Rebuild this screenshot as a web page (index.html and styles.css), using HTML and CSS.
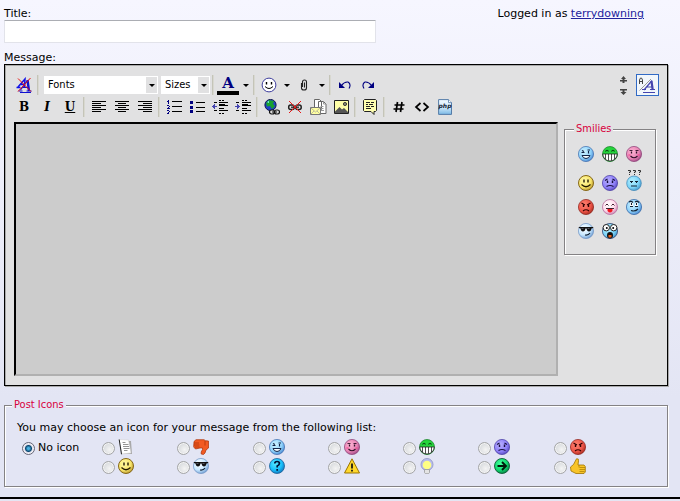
FILE: index.html
```html
<!DOCTYPE html>
<html lang="en">
<head>
<meta charset="utf-8">
<title>Post message</title>
<link rel="stylesheet" href="styles.css">
</head>
<body>
<svg class="defs" width="0" height="0" aria-hidden="true">
  <defs>
    <radialGradient id="g-blue" cx=".38" cy=".35" r=".75"><stop offset="0" stop-color="#d0f4ff"/><stop offset=".6" stop-color="#8cd0fa"/><stop offset="1" stop-color="#3b74c4"/></radialGradient>
    <radialGradient id="g-pink" cx=".38" cy=".35" r=".75"><stop offset="0" stop-color="#ffb4d4"/><stop offset=".6" stop-color="#e684b4"/><stop offset="1" stop-color="#8c3a78"/></radialGradient>
    <radialGradient id="g-yellow" cx=".38" cy=".35" r=".75"><stop offset="0" stop-color="#fffaa8"/><stop offset=".6" stop-color="#f8e468"/><stop offset="1" stop-color="#a88420"/></radialGradient>
    <radialGradient id="g-purple" cx=".38" cy=".35" r=".75"><stop offset="0" stop-color="#b8b0ff"/><stop offset=".6" stop-color="#8e80f8"/><stop offset="1" stop-color="#4a3cae"/></radialGradient>
    <radialGradient id="g-red" cx=".38" cy=".35" r=".75"><stop offset="0" stop-color="#ff8474"/><stop offset=".6" stop-color="#ee5548"/><stop offset="1" stop-color="#962418"/></radialGradient>
    <radialGradient id="g-sky" cx=".38" cy=".35" r=".75"><stop offset="0" stop-color="#b4f0ff"/><stop offset=".6" stop-color="#7cd4f8"/><stop offset="1" stop-color="#3886bc"/></radialGradient>
    <radialGradient id="g-white" cx=".38" cy=".35" r=".75"><stop offset="0" stop-color="#fff"/><stop offset=".55" stop-color="#c8e8ff"/><stop offset="1" stop-color="#5c8cc8"/></radialGradient>
    <radialGradient id="g-rose" cx=".4" cy=".35" r=".7"><stop offset="0" stop-color="#fff"/><stop offset=".6" stop-color="#ffdcec"/><stop offset="1" stop-color="#c880b0"/></radialGradient>
    <radialGradient id="g-cyan" cx=".4" cy=".35" r=".7"><stop offset="0" stop-color="#58e8ff"/><stop offset=".6" stop-color="#18c0fc"/><stop offset="1" stop-color="#1470b8"/></radialGradient>
    <radialGradient id="g-green" cx=".4" cy=".35" r=".7"><stop offset="0" stop-color="#48ffa0"/><stop offset=".6" stop-color="#10dc70"/><stop offset="1" stop-color="#087840"/></radialGradient>
    <linearGradient id="g-php" x2="0" y2="1"><stop offset="0" stop-color="#f2faff"/><stop offset=".5" stop-color="#d4ecfc"/><stop offset="1" stop-color="#7ab8e4"/></linearGradient>
  </defs>

  <symbol id="wink" viewBox="0 0 16 16"><circle cx="8" cy="8" r="7.600" fill="url(#g-blue)" stroke="#3c6cae" stroke-width=".7"/><path d="M3.500 6.500h3M4 4.500l2 1M10.500 5v2.500M9.500 4h2.500" stroke="#124" stroke-width="1.100" fill="none"/><path d="M4 9.500h8q-1 3-4 3t-4-3z" fill="#f4fcff" stroke="#124"/></symbol>
  <symbol id="grin" viewBox="0 0 16 16"><circle cx="8" cy="8" r="7.500" fill="#25d53c" stroke="#147a24" stroke-width=".7"/><path d="M3.500 5.500q1.500-2.500 3 0M9.500 5.500q1.500-2.500 3 0" fill="none" stroke="#084010" stroke-width="1.100"/><path d="M.7 8h14.600q-.7 6.500-7.300 7Q1.400 14.500.7 8z" fill="#fff" stroke="#222" stroke-width=".8"/><path d="M3.500 8v5M6.500 8v6.500M9.500 8v6.500M12.500 8v5" stroke="#222" stroke-width=".8"/></symbol>
  <symbol id="blush" viewBox="0 0 16 16"><circle cx="8" cy="8" r="7.600" fill="url(#g-pink)" stroke="#8a3c74" stroke-width=".7"/><path d="M3.500 4.500h3M9.500 4.500h3" stroke="#301028" stroke-width=".9"/><path d="M5.500 5.500v2M10.500 5.500v2" stroke="#301028" stroke-width="1.300"/><path d="M4.500 10q3.500 3.500 7 0" fill="none" stroke="#301028" stroke-width="1.100"/><path d="M2.500 9h2M11.500 9h2" stroke="#f83888"/></symbol>
  <symbol id="smile" viewBox="0 0 16 16"><circle cx="8" cy="8" r="7.500" fill="url(#g-yellow)" stroke="#866818"/><path d="M6 4.500v3M10 4.500v3" stroke="#221800" stroke-width="1.400"/><path d="M3.500 9.500q4.500 4.500 9 0" fill="none" stroke="#221800" stroke-width="1.200"/></symbol>
  <symbol id="sad" viewBox="0 0 16 16"><circle cx="8" cy="8" r="7.600" fill="url(#g-purple)" stroke="#4436a0" stroke-width=".7"/><path d="M3 5.500l2.500-1.500M10.500 4L13 5.500M4.500 11.500q3.500-2 7 0" fill="none" stroke="#181040" stroke-width="1.100"/><path d="M5.500 5.500V8M10.500 5.500V8" stroke="#181040" stroke-width="1.400"/></symbol>
  <symbol id="mad" viewBox="0 0 16 16"><circle cx="8" cy="8" r="7.600" fill="url(#g-red)" stroke="#8c2018" stroke-width=".7"/><path d="M3.500 4L7 6M12.500 4L9 6M5 12q3-2.500 6 0" fill="none" stroke="#300" stroke-width="1.100"/><path d="M5.500 5.500V8M10.500 5.500V8" stroke="#300" stroke-width="1.400"/></symbol>
  <symbol id="confused" viewBox="0 0 16 21"><circle cx="8" cy="13.300" r="7.300" fill="url(#g-sky)" stroke="#3a84b4" stroke-width=".7"/><path d="M4 11.500h3M9 11.500h3M5 16h6" fill="none" stroke="#123"/><path d="M5.500 11.500v1.500M10.500 11.500v1.500" stroke="#123"/><path d="M2 .5h2.500v1.500h-1v1M3 4.500h1M7 .5h2.500v1.500h-1v1M8 4.500h1M12 .5h2.500v1.500h-1v1M13 4.500h1" fill="none" stroke="#333"/></symbol>
  <symbol id="tongue" viewBox="0 0 16 16"><circle cx="8" cy="8" r="7.500" fill="url(#g-rose)" stroke="#b870a0" stroke-width=".8"/><path d="M3.500 6.500L5 5l1.500 1.500M9.500 6.500L11 5l1.500 1.500M4 9.500h8" fill="none" stroke="#402030"/><path d="M5.500 10h5v2q-2.500 3-5 0z" fill="#f01820"/></symbol>
  <symbol id="roll" viewBox="0 0 16 16"><circle cx="8" cy="8" r="7.600" fill="url(#g-blue)" stroke="#2c62a4" stroke-width=".7"/><path d="M4 3.500h3v3.500H4zM9 3.500h3v3.500H9z" fill="#fff"/><path d="M3 3q2-1.500 4 .5M9 3q2-1.500 4 .5M5.500 4v2M10.500 4v2M4 7.500h3M9 7.500h3M5 11.500q4 1.500 7-1.500" fill="none" stroke="#123" stroke-width="1.100"/></symbol>
  <symbol id="cool" viewBox="0 0 16 16"><circle cx="8" cy="8" r="7.600" fill="url(#g-white)" stroke="#7094c4" stroke-width=".7"/><path d="M.8 4h14.400v1l-1.700.5q-.5 3-2.500 3T8.500 5.500h-1Q7 8.500 5 8.500t-2.500-3L.8 5z" fill="#111"/><path d="M3.500 5.500h2M9.500 5.500h2" stroke="#667" stroke-width=".8"/><path d="M7 12q3.500.5 5-2" fill="none" stroke="#123" stroke-width="1.100"/></symbol>
  <symbol id="eek" viewBox="0 0 16 16"><circle cx="8" cy="8" r="7.600" fill="url(#g-sky)" stroke="#236" stroke-width=".7"/><circle cx="4.300" cy="4.700" r="3.200" fill="#fff" stroke="#111" stroke-width=".9"/><circle cx="11.700" cy="4.700" r="3.200" fill="#fff" stroke="#111" stroke-width=".9"/><circle cx="4.800" cy="5" r="1"/><circle cx="11.200" cy="5" r="1"/><ellipse cx="8" cy="12.300" rx="3" ry="3.300" fill="#111"/><path d="M6.500 12h3v2.500h-3z" fill="#e85c18"/></symbol>
  <symbol id="page" viewBox="0 0 16 16"><path d="M3 2h10l1 13H4z" fill="#a8a8a8"/><path d="M1 .5l9.500.5 2.500 13-9 1z" fill="#fff" stroke="#ccc" stroke-width=".5"/><path d="M1.200.5l2.300 14.800" stroke="#222"/><path d="M4.500 3.500h3M5 5.500h5.500M5 7.500h6M5.500 9.500h6M6 11.500h3.500" stroke="#888" stroke-width=".9"/></symbol>
  <symbol id="thumbdown" viewBox="0 0 16 16"><path d="M1 2.500L3 .7h8l1.500 1L15.500 2v7l-2.500 2-1 3-1.500 1.500-2.300-.5V13l1.300-2.500V9H7L2.500 10 .7 8z" fill="#f25a22" stroke="#a83008" stroke-width=".7"/><path d="M1 4h5M.8 6h5.500M2 8h4.500M12 2v4.500" fill="none" stroke="#b03408" stroke-width=".8"/></symbol>
  <symbol id="question" viewBox="0 0 16 16"><circle cx="8" cy="8" r="7.500" fill="url(#g-cyan)" stroke="#186098" stroke-width=".8"/><path d="M5.800 5.500q0-2 2.300-2t2.300 2Q10.400 7 8.200 8v1.500M8.200 11v1.800" fill="none" stroke="#013" stroke-width="1.700"/></symbol>
  <symbol id="warn" viewBox="0 0 16 16"><path d="M8 .8L15.500 15H.5z" fill="#ffd82c" stroke="#9a7400" stroke-linejoin="round"/><path d="M8 5.500v5M8 11.800v1.700" stroke="#111" stroke-width="1.700"/></symbol>
  <symbol id="bulb" viewBox="0 0 16 16"><circle cx="8" cy="6.500" r="6" fill="#b8bcec" stroke="#9aa0cc"/><circle cx="8" cy="7" r="4.300" fill="#ffff84"/><path d="M5.500 11.500h5v3l-1 1.200h-3l-1-1.200z" fill="#e4e4e4" stroke="#999" stroke-width=".8"/></symbol>
  <symbol id="arrow" viewBox="0 0 16 16"><circle cx="8" cy="8" r="7.500" fill="url(#g-green)" stroke="#0c5c34" stroke-width=".9"/><path d="M3.500 8h8M8 4l4 4-4 4" fill="none" stroke="#001a0c" stroke-width="1.900"/></symbol>
  <symbol id="thumbup" viewBox="0 0 16 16"><path d="M.5 9l3-2.500L6.500.800q2.500-.5 2 2L8 7h6l1.300 1.500v5.500L14 15.500H6L1 13z" fill="#f8c428" stroke="#a07400" stroke-width=".8"/><path d="M9 7v2.500M9.500 9.500h5.500M9.500 11.500h5.500M9.500 13.500h5" stroke="#a87c00" stroke-width=".7"/></symbol>
</svg>

<form class="page">
  <div class="head">
    <label for="title">Title:</label>
    <p class="login">Logged in as <a href="#">terrydowning</a></p>
  </div>
  <input class="title-box" id="title" type="text">
  <label class="message-label" for="message">Message:</label>

  <div class="editor">
    <div class="tools">
      <div class="bar">
        <button type="button" class="tool" aria-label="Remove formatting"><svg width="16" height="16"><path d="M.5 10.500h4M2 10L9 2l-.5 8M4.500 7.500h4" fill="none" stroke="#1010e8" stroke-width="1.500"/><path d="M4.500 13L11.500 3.500M7 10.500h6M2.500 14h4M10.500 14h5M4 15.500h11" fill="none" stroke="#1010d0" stroke-width="1.200"/><path d="M11.500 3l1.500 11" stroke="#1010d0" stroke-width="2.400"/><path d="M2 1.500l13 13M14.500 1L2 14.500" stroke="#e81010"/></svg></button>
        <span class="sep"></span>
        <span class="drop drop-font"><select aria-label="Fonts"><option>Fonts</option></select><i class="drop-arrow"><b class="tri"></b></i></span>
        <span class="drop drop-size"><select aria-label="Sizes"><option>Sizes</option></select><i class="drop-arrow"><b class="tri"></b></i></span>
        <span class="sep"></span>
        <button type="button" class="tool color" aria-label="Text colour"><span class="letter">A</span></button>
        <button type="button" class="more" aria-label="More colours"><b class="tri"></b></button>
        <span class="sep"></span>
        <button type="button" class="tool" aria-label="Insert smilie"><svg width="16" height="16"><circle cx="8" cy="8" r="6.900" fill="#fff" stroke="#3c3c9c"/><path d="M5.500 5v2.500M10.500 5v2.500" stroke="#000" stroke-width="1.400"/><path d="M4 9.500q4 4 8 0" fill="none" stroke="#000"/></svg></button>
        <button type="button" class="more" aria-label="More smilies"><b class="tri"></b></button>
        <button type="button" class="tool" aria-label="Attach file"><svg width="8" height="12"><path d="M2.500 8V3q0-2 2-2t2 2v6q0 2-2.500 2T1.500 9V4M4.500 3.500v5" fill="none" stroke="#222" stroke-width="1.100"/></svg></button>
        <button type="button" class="more" aria-label="More attachments"><b class="tri"></b></button>
        <span class="sep"></span>
        <button type="button" class="tool" aria-label="Undo"><svg width="14" height="10"><path d="M1 2v6h6z" fill="#000080"/><path d="M3.500 5.500q3-4 6.500-3.500 3.500 2 1 6.500" fill="none" stroke="#000080" stroke-width="1.100"/></svg></button>
        <button type="button" class="tool" aria-label="Redo"><svg width="14" height="10"><path d="M13 2v6H7z" fill="#000080"/><path d="M10.500 5.500Q7.500 1.500 4 2 .5 4 3 8.500" fill="none" stroke="#000080" stroke-width="1.100"/></svg></button>
        <span class="resize">
          <button type="button" class="size-step" aria-label="Decrease size"><svg width="7" height="7"><path d="M3.500 0L6 3H4.500v1L7 4v1.500H4.500V7h-2V5.500H0V4h2.500V3H1z" fill="#444"/></svg></button>
          <button type="button" class="size-step" aria-label="Increase size"><svg width="7" height="7"><path d="M3.500 7L6.500 4H4.500V2.500H7V1H0v1.500h2.500V4H.5z" fill="#444"/></svg></button>
        </span>
        <button type="button" class="mode" aria-label="Switch editor mode"><svg width="19" height="18"><path d="M1.500 8V4l1-2h1l1 2v4M1.500 5.500h3" fill="none" stroke="#444"/><path d="M1.500 14.500L13 3" stroke="#999"/><path d="M6 14l8-9.500M9 11h5M4 13.500h4M12 13.500h5M5 16.500h12" fill="none" stroke="#4444ae" stroke-width="1.200"/><path d="M13.500 5l1.200 9" stroke="#4444ae" stroke-width="2.200"/></svg></button>
      </div>
      <div class="bar">
        <button type="button" class="tool"><span class="letter">B</span></button>
        <button type="button" class="tool"><span class="letter italic">I</span></button>
        <button type="button" class="tool"><span class="letter under">U</span></button>
        <span class="sep"></span>
        <button type="button" class="tool" aria-label="Align left"><svg class="px" width="14" height="12"><path d="M0 .5h14M0 2.500h9M0 4.500h14M0 6.500h9M0 8.500h14M0 10.500h9"/></svg></button>
        <button type="button" class="tool" aria-label="Align centre"><svg class="px" width="14" height="12"><path d="M0 .5h14M3 2.500h8M0 4.500h14M3 6.500h8M0 8.500h14M3 10.500h8"/></svg></button>
        <button type="button" class="tool" aria-label="Align right"><svg class="px" width="14" height="12"><path d="M0 .5h14M5 2.500h9M0 4.500h14M5 6.500h9M0 8.500h14M5 10.500h9"/></svg></button>
        <span class="sep"></span>
        <button type="button" class="tool" aria-label="Numbered list"><svg class="px" width="15" height="14"><path d="M5 1.500h10M5 6.500h10M5 11.500h10"/><path class="navy" d="M1.500 0v4M0 1.500h1M0 5.500h2M2.500 6v1M1 7.500h1M0 8.500h3M0 10.500h2M2.500 11v1M1 12h1M0 13.500h2"/></svg></button>
        <button type="button" class="tool" aria-label="Bulleted list"><svg class="px" width="15" height="14"><path d="M6 2.500h9M6 7.500h9M6 11.500h9"/><path d="M0 1h3v3H0zM0 6h3v3H0zM0 10h3v3H0z" fill="#000080" stroke="none"/></svg></button>
        <button type="button" class="tool" aria-label="Outdent"><svg class="px" width="16" height="14"><path d="M7 .5h2M10 .5h2M2 2.500h3M7 2.500h9M7 5.500h9M7 8.500h5M2 10.500h3M7 10.500h9M7 13.500h2M10 13.500h2M7 4.500h6"/><path d="M0 6.500L3 3v3h2v1H3v3z" fill="#4444b0" stroke="none"/></svg></button>
        <button type="button" class="tool" aria-label="Indent"><svg class="px" width="16" height="14"><path d="M7 .5h2M10 .5h2M1 2.500h3M7 2.500h9M7 5.500h9M7 8.500h5M1 10.500h3M7 10.500h9M7 13.500h2M10 13.500h2M7 4.500h6"/><path d="M5 6.500L2 3v3H0v1h2v3z" fill="#4444b0" stroke="none"/></svg></button>
        <span class="sep"></span>
        <button type="button" class="tool" aria-label="Insert link"><svg width="16" height="16"><circle cx="6.500" cy="6" r="5.600" fill="#2040c8" stroke="#101850"/><path d="M5 1l5 1-1 3 2 2-3 3-2-3-3 .5L2 4z" fill="#18a030"/><path d="M3 3l2-1v2z" fill="#8ff"/><rect x="5.500" y="11" width="5" height="4" rx="2" fill="#ddd" stroke="#111" stroke-width="1.200"/><rect x="10.500" y="11" width="5" height="4" rx="2" fill="#ddd" stroke="#111" stroke-width="1.200"/><path d="M8 13h5" stroke="#111"/></svg></button>
        <button type="button" class="tool" aria-label="Remove link"><svg width="16" height="14"><rect x="1.700" y="5" width="5.500" height="4.500" rx="2" fill="none" stroke="#222" stroke-width="1.500"/><rect x="8.700" y="5" width="5.500" height="4.500" rx="2" fill="none" stroke="#222" stroke-width="1.500"/><path d="M4 7.200h8" stroke="#222" stroke-width="1.300"/><path d="M2 1l12 12M14 1L2 13" stroke="#e81818"/></svg></button>
        <button type="button" class="tool" aria-label="Insert email link"><svg width="17" height="16"><path d="M4.500.5h5l2 2v8h-7zM8.500 2.500h5l2.500 2.500v9.500H8.500z" fill="#fff" stroke="#666"/><path d="M13.500 2.500V5H16M10.500 7.500h3M10.500 9.500h3M11 11.500h3" fill="none" stroke="#999"/><path d="M.5 8.500h10v7H.5z" fill="#ffffa0" stroke="#777"/><path d="M1 9l4.500 4L10 9M1 15l3-3M10 15l-3-3" fill="none" stroke="#aa9" stroke-width=".8"/></svg></button>
        <button type="button" class="tool" aria-label="Insert image"><svg width="15" height="14"><path d="M.5.5h14v13H.5z" fill="#ffffa8" stroke="#222"/><path d="M1 11.500L5.500 7 8 9.500 10 8l4 4v1H1z" fill="#555"/><circle cx="11" cy="4" r="1.600" fill="#887" stroke="#222" stroke-width=".8"/></svg></button>
        <span class="sep"></span>
        <button type="button" class="tool" aria-label="Quote"><svg width="14" height="16"><path d="M1.500.5h11l1 1v10l-1 1H11v3l-3-3H1.500l-1-1v-10z" fill="#ffffb0" stroke="#222"/><path d="M3 3.500h4M8 3.500h3M3 5.500h2M6 5.500h4M3 7.500h4M8 7.500h3M3 9.500h5" stroke="#222"/></svg></button>
        <span class="sep"></span>
        <button type="button" class="tool" aria-label="Code"><svg width="12" height="12"><path d="M4.500 1L3 11M9 1L7.500 11M1.500 4h10M.5 8h10" fill="none" stroke="#000" stroke-width="1.700"/></svg></button>
        <button type="button" class="tool" aria-label="HTML"><svg width="16" height="12"><path d="M6.500 2L2 6l4.500 4M9.500 2L14 6l-4.500 4" fill="none" stroke="#000" stroke-width="1.700"/></svg></button>
        <button type="button" class="tool" aria-label="PHP"><svg width="14" height="16"><path d="M.6.6h9.900l3 3v11.800H.6z" fill="url(#g-php)" stroke="#557ca8"/><path d="M10.500.6v3h3" fill="#fff" stroke="#557ca8" stroke-width=".8"/><text class="php" x="7" y="9" text-anchor="middle">php</text></svg></button>
      </div>
    </div>
    <div class="work">
      <textarea id="message" class="message"></textarea>
      <fieldset class="smilies">
        <legend>Smilies</legend>
        <div class="smilie-grid">
          <svg class="icon"><use href="#wink"/></svg><svg class="icon"><use href="#grin"/></svg><svg class="icon"><use href="#blush"/></svg>
          <svg class="icon"><use href="#smile"/></svg><svg class="icon"><use href="#sad"/></svg><svg class="icon tall"><use href="#confused"/></svg>
          <svg class="icon"><use href="#mad"/></svg><svg class="icon"><use href="#tongue"/></svg><svg class="icon"><use href="#roll"/></svg>
          <svg class="icon"><use href="#cool"/></svg><svg class="icon"><use href="#eek"/></svg>
        </div>
      </fieldset>
    </div>
  </div>

  <fieldset class="post-icons">
    <legend>Post Icons</legend>
    <p class="hint">You may choose an icon for your message from the following list:</p>
    <div class="icon-grid">
      <label class="choice none"><input type="radio" name="icon" checked>No icon</label>
      <label class="choice"><input type="radio" name="icon" aria-label="Post"><svg class="icon"><use href="#page"/></svg></label>
      <label class="choice"><input type="radio" name="icon" aria-label="Thumbs down"><svg class="icon"><use href="#thumbdown"/></svg></label>
      <label class="choice"><input type="radio" name="icon" aria-label="Wink"><svg class="icon"><use href="#wink"/></svg></label>
      <label class="choice"><input type="radio" name="icon" aria-label="Blush"><svg class="icon"><use href="#blush"/></svg></label>
      <label class="choice"><input type="radio" name="icon" aria-label="Grin"><svg class="icon"><use href="#grin"/></svg></label>
      <label class="choice"><input type="radio" name="icon" aria-label="Sad"><svg class="icon"><use href="#sad"/></svg></label>
      <label class="choice"><input type="radio" name="icon" aria-label="Mad"><svg class="icon"><use href="#mad"/></svg></label>
      <label class="choice second"><input type="radio" name="icon" aria-label="Smile"><svg class="icon"><use href="#smile"/></svg></label>
      <label class="choice"><input type="radio" name="icon" aria-label="Cool"><svg class="icon"><use href="#cool"/></svg></label>
      <label class="choice"><input type="radio" name="icon" aria-label="Question"><svg class="icon"><use href="#question"/></svg></label>
      <label class="choice"><input type="radio" name="icon" aria-label="Exclamation"><svg class="icon"><use href="#warn"/></svg></label>
      <label class="choice"><input type="radio" name="icon" aria-label="Lightbulb"><svg class="icon"><use href="#bulb"/></svg></label>
      <label class="choice"><input type="radio" name="icon" aria-label="Arrow"><svg class="icon"><use href="#arrow"/></svg></label>
      <label class="choice"><input type="radio" name="icon" aria-label="Thumbs up"><svg class="icon"><use href="#thumbup"/></svg></label>
    </div>
  </fieldset>
</form>
</body>
</html>
```
FILE: styles.css
```css
* { box-sizing: border-box; }

html { background: #e4e5f3; }

body {
  margin: 0;
  font: 11px/14px "DejaVu Sans", Verdana, sans-serif;
  color: #000;
}

.defs { position: absolute; }

.page {
  padding: 7px 11px 10px 4px;
  background: linear-gradient(#f6f6ff, #e3e5f4 80%);
  border-bottom: 2px solid #000;
}

p { margin: 0; }

.head {
  display: flex;
  justify-content: space-between;
  padding-right: 25px;
}

.login a { color: #22229c; }

.title-box {
  display: block;
  width: 372px;
  max-width: 100%;
  height: 23px;
  margin: -1px 0 8px;
  padding: 2px 4px;
  font: inherit;
  background: #fff;
  border: 1px solid #e2e3ea;
  border-top-color: #abadb3;
  border-radius: 1px;
}

.message-label { display: block; }

.editor {
  margin: -1px 1px 12px 0;
  padding: 9px 8px;
  background: #e1e1e2;
  border: 1px solid #000;
  box-shadow: inset 1px 1px #aaa, 1px 1px #aaa;
}

.bar {
  display: flex;
  align-items: center;
  gap: 1px;
  height: 22px;
}

button {
  display: flex;
  align-items: center;
  justify-content: center;
  height: 22px;
  padding: 0;
  color: #000;
  background: none;
  border: 0;
}

.tool { width: 22px; }
.more { width: 11px; }

.sep {
  width: 2px;
  height: 20px;
  margin: 0 2px 0 1px;
  background: #c4c4b8;
  border-right: 1px solid #d8d8d0;
}

.tri {
  border: 3px solid transparent;
  border-top-color: #000;
  border-bottom: 0;
}

.letter {
  font: bold 12px/14px "DejaVu Serif", serif;
}
.italic { font-style: italic; }
.under { text-decoration: underline; }

.color {
  align-items: flex-start;
  border-bottom: 4px solid #000;
  height: 20px;
}
.color .letter { color: #000080; font-size: 15px; line-height: 16px; }

.drop {
  display: grid;
  height: 18px;
  margin-left: 2px;
  background: #fff;
}
.drop-font { width: 114px; }
.drop-size { width: 49px; }

.drop select {
  grid-area: 1 / 1;
  width: 100%;
  padding: 0 4px;
  font: 11px/18px "DejaVu Sans Condensed", Tahoma, sans-serif;
  color: #000;
  background: none;
  border: 0;
  appearance: none;
}

.drop-arrow {
  grid-area: 1 / 1;
  justify-self: end;
  display: flex;
  align-items: center;
  justify-content: center;
  width: 12px;
  background: #e1e1e2;
  border: 1px solid #fff;
  border-left: 0;
  pointer-events: none;
}

.resize {
  display: grid;
  gap: 5px;
  margin: 0 7px 0 auto;
}
.size-step { width: 9px; height: 7px; }

.mode {
  width: 23px;
  background: #f1f6fb;
  border: 1px solid #316ac5;
}

.px { shape-rendering: crispEdges; }
.px path { stroke: #000; }
.px .navy { stroke: #000080; }
.px path[stroke="none"] { stroke: none; }

.php { font: italic bold 6px "DejaVu Sans", sans-serif; fill: #123; }

.work {
  display: flex;
  align-items: flex-start;
  gap: 6px;
  padding: 4px 3px 0 1px;
}

.message {
  flex: 1;
  min-width: 0;
  height: 254px;
  margin: 0;
  padding: 4px;
  font: inherit;
  background: #ccc;
  border: 2px solid #b0b0b0;
  border-top-color: #000;
  border-left-color: #000;
  resize: none;
}

fieldset {
  margin: 0;
  border: 1px solid #848284;
  box-shadow: inset 1px 1px #fff, 1px 1px #fff;
}

legend {
  padding: 0 2px;
  font-family: "DejaVu Sans Condensed", Tahoma, sans-serif;
  color: #d8003c;
}

.smilies {
  padding: 10px 9px 15px;
}
.smilies legend { background: #e1e1e2; }

.smilie-grid {
  display: grid;
  grid-template-columns: repeat(3, 24px);
  row-gap: 8px;
  justify-items: center;
  align-items: end;
}

.icon { display: block; width: 16px; height: 16px; }
.tall { height: 21px; }

.post-icons {
  margin-right: 1px;
  padding: 9px 38px 10px 7px;
}
.post-icons legend { background: #e3e5f4; }

.hint { padding: 0 0 3px 5px; }

.icon-grid {
  display: grid;
  grid-template-columns: 80px repeat(7, 1fr);
  grid-auto-rows: 19px;
  padding-left: 10px;
}

.choice {
  display: flex;
  align-items: flex-end;
  gap: 3px;
  padding-bottom: 2px;
}

.second { grid-column: 2; }

input[type="radio"] {
  width: 13px;
  height: 13px;
  margin: 0;
  appearance: none;
  background: radial-gradient(circle at 60% 60%, #f4f4f4, #ccd0d4);
  border: 1px solid #a4a5a6;
  border-radius: 50%;
  box-shadow: inset 0 0 0 1px #f4f4f4;
}
input[type="radio"]:checked {
  background: radial-gradient(circle, #48b0e0 0 1px, #0c4870 3px, #dde 4px);
  border-color: #667;
}
```
